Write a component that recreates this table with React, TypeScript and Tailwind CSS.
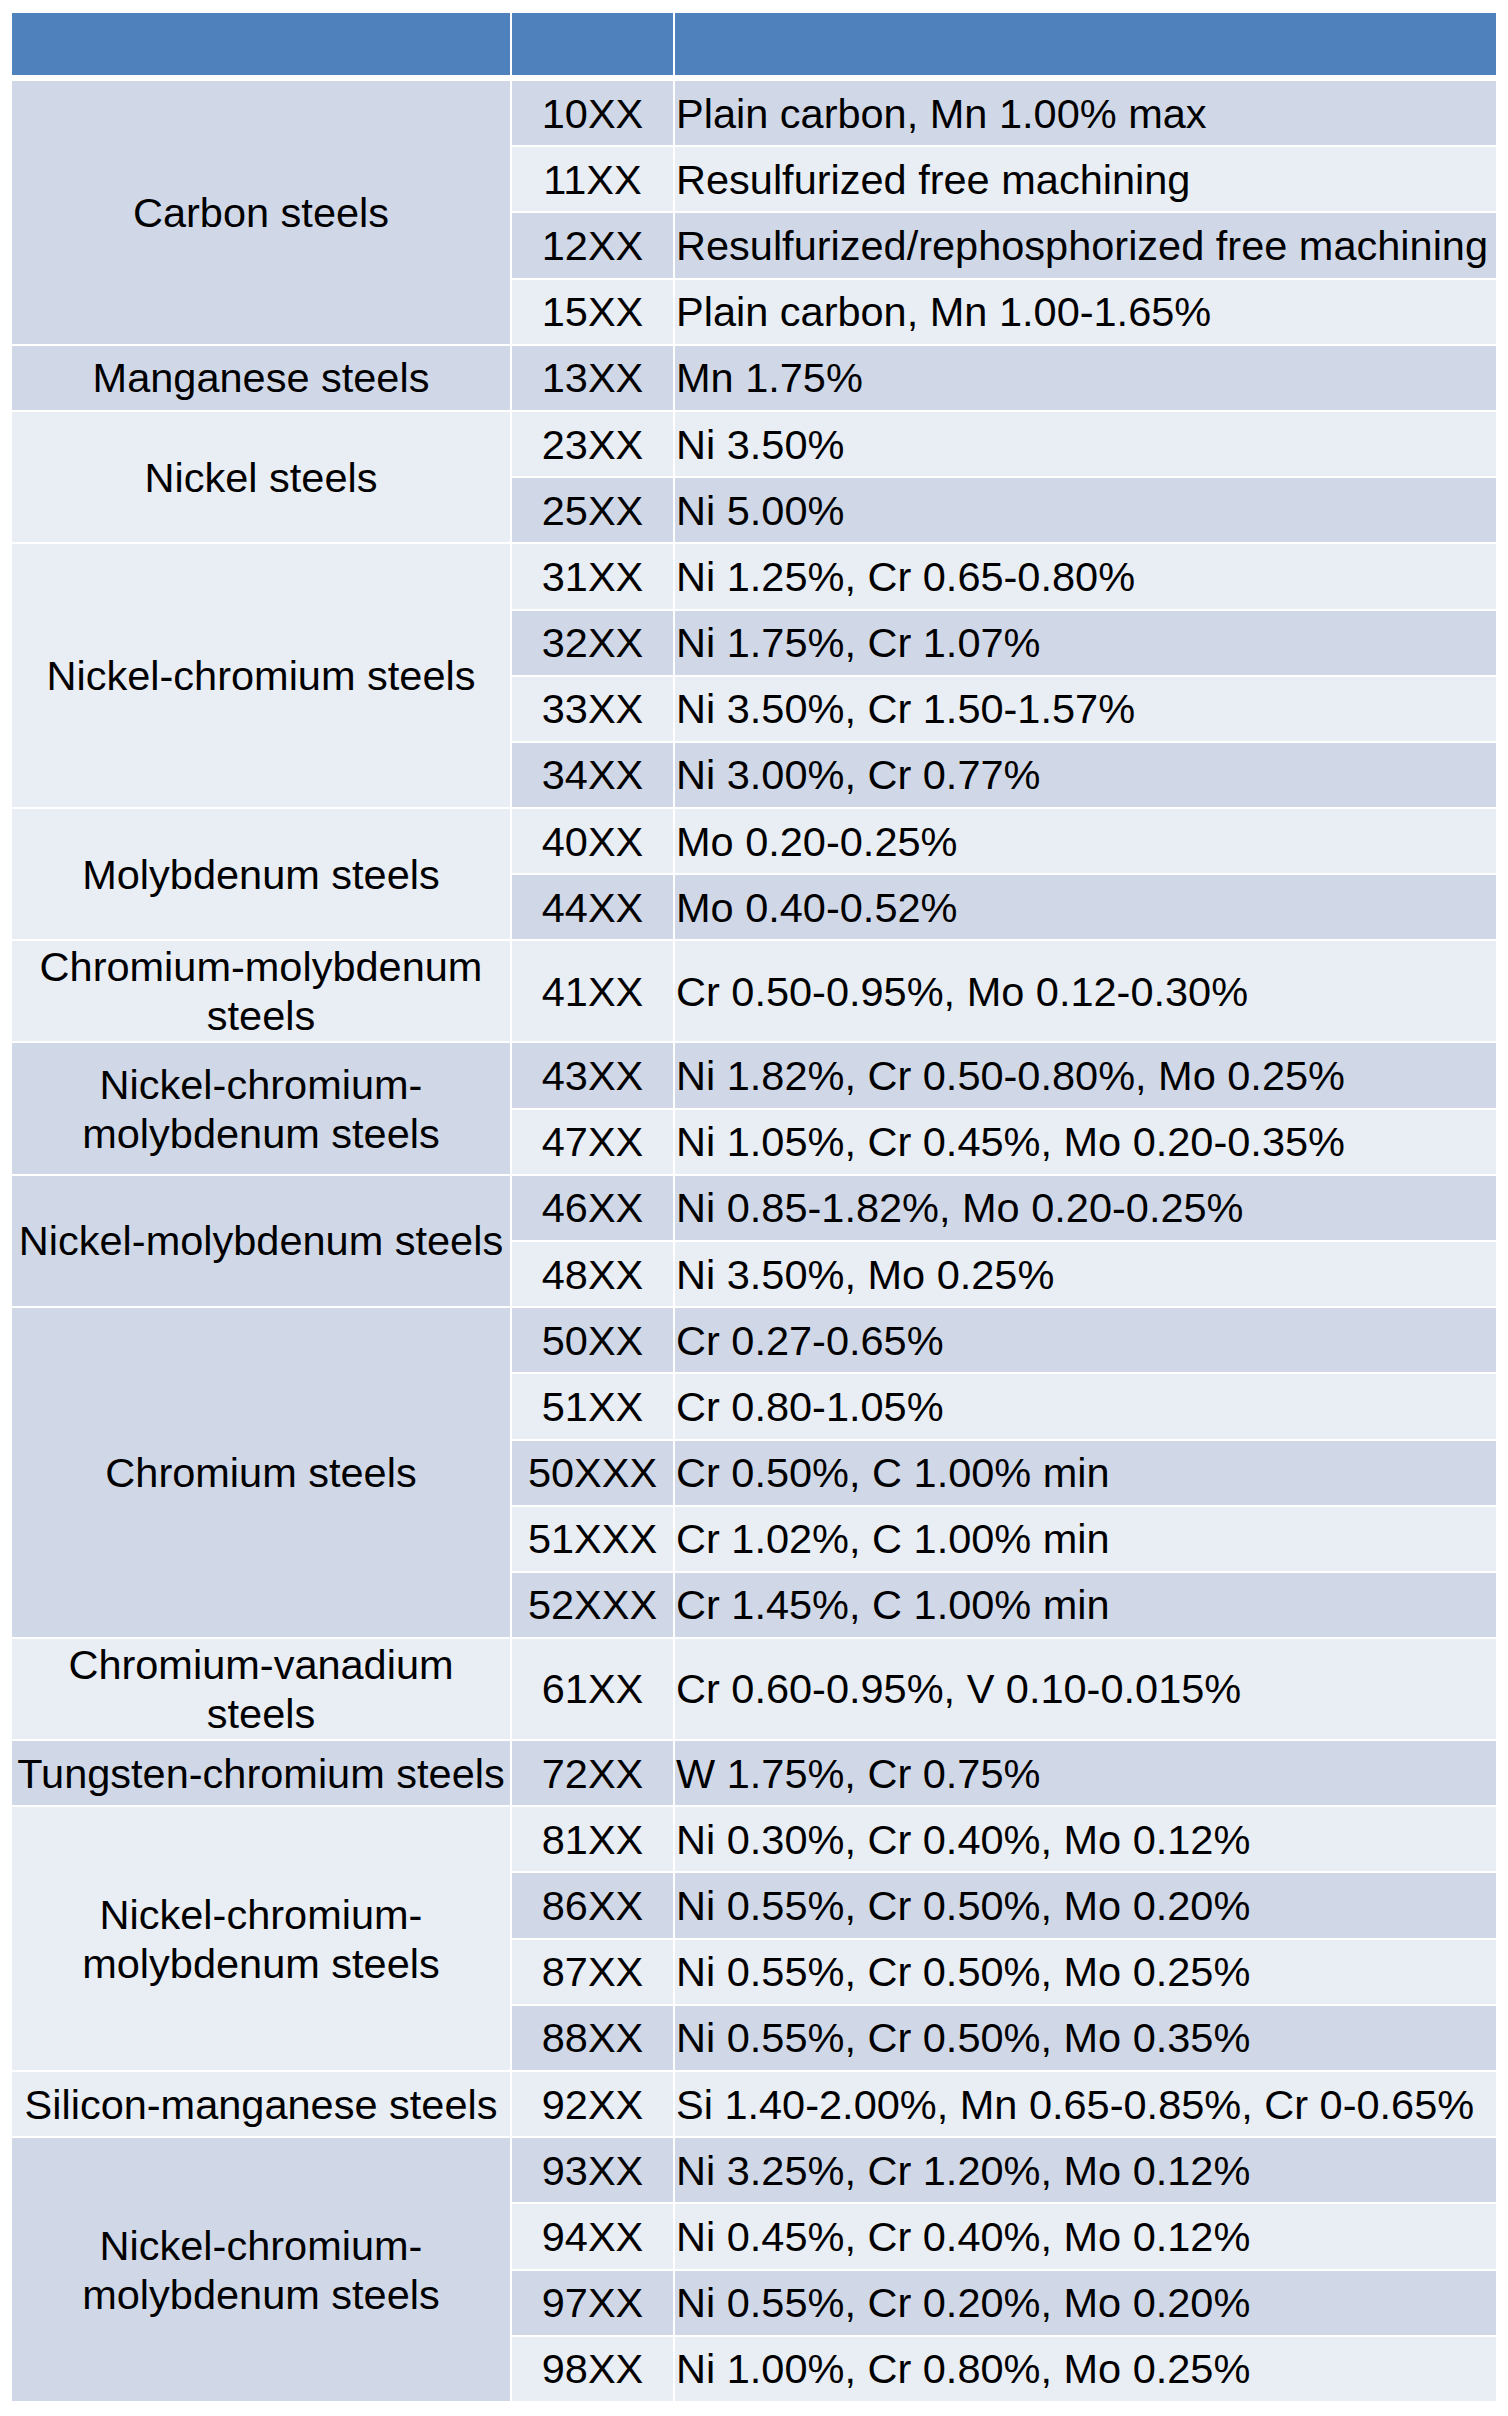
type Group = {
  name: string[];
  tall?: boolean;
  rows: [string, string][];
};

const groups: Group[] = [
  {
    name: ['Carbon steels'],
    rows: [
      ['10XX', 'Plain carbon, Mn 1.00% max'],
      ['11XX', 'Resulfurized free machining'],
      ['12XX', 'Resulfurized/rephosphorized free machining'],
      ['15XX', 'Plain carbon, Mn 1.00-1.65%'],
    ],
  },
  { name: ['Manganese steels'], rows: [['13XX', 'Mn 1.75%']] },
  {
    name: ['Nickel steels'],
    rows: [
      ['23XX', 'Ni 3.50%'],
      ['25XX', 'Ni 5.00%'],
    ],
  },
  {
    name: ['Nickel-chromium steels'],
    rows: [
      ['31XX', 'Ni 1.25%, Cr 0.65-0.80%'],
      ['32XX', 'Ni 1.75%, Cr 1.07%'],
      ['33XX', 'Ni 3.50%, Cr 1.50-1.57%'],
      ['34XX', 'Ni 3.00%, Cr 0.77%'],
    ],
  },
  {
    name: ['Molybdenum steels'],
    rows: [
      ['40XX', 'Mo 0.20-0.25%'],
      ['44XX', 'Mo 0.40-0.52%'],
    ],
  },
  {
    name: ['Chromium-molybdenum', 'steels'],
    tall: true,
    rows: [['41XX', 'Cr 0.50-0.95%, Mo 0.12-0.30%']],
  },
  {
    name: ['Nickel-chromium-', 'molybdenum steels'],
    rows: [
      ['43XX', 'Ni 1.82%, Cr 0.50-0.80%, Mo 0.25%'],
      ['47XX', 'Ni 1.05%, Cr 0.45%, Mo 0.20-0.35%'],
    ],
  },
  {
    name: ['Nickel-molybdenum steels'],
    rows: [
      ['46XX', 'Ni 0.85-1.82%, Mo 0.20-0.25%'],
      ['48XX', 'Ni 3.50%, Mo 0.25%'],
    ],
  },
  {
    name: ['Chromium steels'],
    rows: [
      ['50XX', 'Cr 0.27-0.65%'],
      ['51XX', 'Cr 0.80-1.05%'],
      ['50XXX', 'Cr 0.50%, C 1.00% min'],
      ['51XXX', 'Cr 1.02%, C 1.00% min'],
      ['52XXX', 'Cr 1.45%, C 1.00% min'],
    ],
  },
  {
    name: ['Chromium-vanadium', 'steels'],
    tall: true,
    rows: [['61XX', 'Cr 0.60-0.95%, V 0.10-0.015%']],
  },
  { name: ['Tungsten-chromium steels'], rows: [['72XX', 'W 1.75%, Cr 0.75%']] },
  {
    name: ['Nickel-chromium-', 'molybdenum steels'],
    rows: [
      ['81XX', 'Ni 0.30%, Cr 0.40%, Mo 0.12%'],
      ['86XX', 'Ni 0.55%, Cr 0.50%, Mo 0.20%'],
      ['87XX', 'Ni 0.55%, Cr 0.50%, Mo 0.25%'],
      ['88XX', 'Ni 0.55%, Cr 0.50%, Mo 0.35%'],
    ],
  },
  { name: ['Silicon-manganese steels'], rows: [['92XX', 'Si 1.40-2.00%, Mn 0.65-0.85%, Cr 0-0.65%']] },
  {
    name: ['Nickel-chromium-', 'molybdenum steels'],
    rows: [
      ['93XX', 'Ni 3.25%, Cr 1.20%, Mo 0.12%'],
      ['94XX', 'Ni 0.45%, Cr 0.40%, Mo 0.12%'],
      ['97XX', 'Ni 0.55%, Cr 0.20%, Mo 0.20%'],
      ['98XX', 'Ni 1.00%, Cr 0.80%, Mo 0.25%'],
    ],
  },
];

const DARK = 'bg-[#d0d8e8]';
const LIGHT = 'bg-[#e9edf4]';

export default function App() {
  // banding follows the table row index, merged cells take the colour of their first row
  let rowIndex = 0;

  return (
    <div className="w-[1508px] h-[2416px] bg-white pl-[12px] pt-[13px] text-black font-[family-name:Liberation_Sans,Arial,sans-serif] text-[41.5px] leading-[1.18]">
      <div className="w-[1484px] flex flex-col">
        <div className="flex gap-[2px] h-[62px] mb-[6px]">
          <div className="w-[498px] bg-[#4f81bd]" />
          <div className="w-[161px] bg-[#4f81bd]" />
          <div className="flex-1 bg-[#4f81bd]" />
        </div>

        <div className="flex flex-col gap-[2px]">
          {groups.map((group, gi) => {
            const first = rowIndex;
            rowIndex += group.rows.length;
            return (
              <div key={gi} className="flex gap-[2px]">
                <div
                  className={`w-[498px] shrink-0 flex flex-col items-center justify-center text-center whitespace-nowrap pt-[2px] ${
                    first % 2 === 0 ? DARK : LIGHT
                  }`}
                >
                  {group.name.map((line) => (
                    <span key={line}>{line}</span>
                  ))}
                </div>
                <div className="flex-1 flex flex-col gap-[2px]">
                  {group.rows.map(([code, desc], ri) => {
                    const band = (first + ri) % 2 === 0 ? DARK : LIGHT;
                    return (
                      <div key={code} className={`flex gap-[2px] ${group.tall ? 'h-[99.5px]' : 'h-[64.2px]'}`}>
                        <div className={`w-[161px] shrink-0 flex items-center justify-center pt-[2px] ${band}`}>
                          {code}
                        </div>
                        <div className={`flex-1 flex items-center pl-[1px] pt-[2px] whitespace-nowrap ${band}`}>
                          {desc}
                        </div>
                      </div>
                    );
                  })}
                </div>
              </div>
            );
          })}
        </div>
      </div>
    </div>
  );
}
